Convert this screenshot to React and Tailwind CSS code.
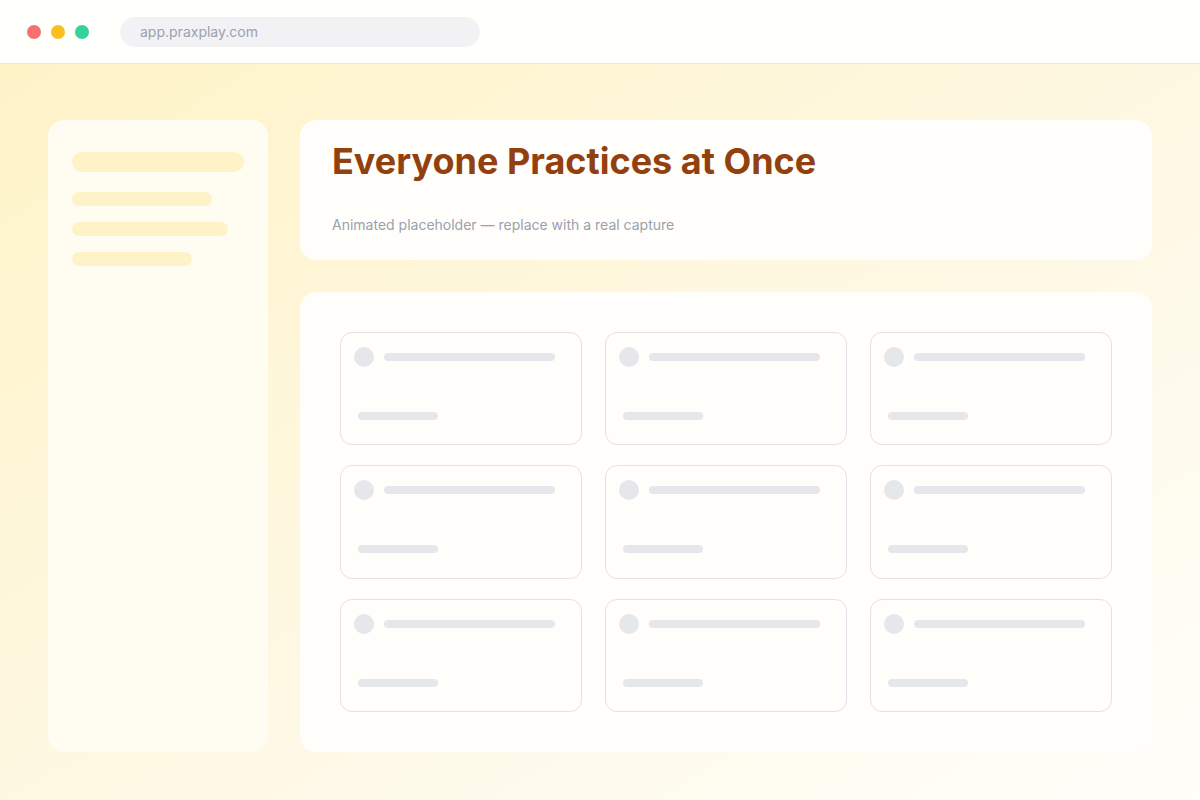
// App.jsx — browser-frame placeholder
const sideBars = ["w-[140px]", "w-[156px]", "w-[120px]"];
const tiles = Array.from({ length: 9 });

function Tile() {
  return (
    <div className="rounded-xl border-[1.5px] border-[#e0e2e8] bg-[#fffefb] pt-[14px] pl-[13px]">
      <div className="flex items-center gap-[10px]">
        <div className="w-5 h-5 rounded-full bg-gray-200" />
        <div className="w-[171px] h-2 rounded-full bg-gray-200" />
      </div>
      <div className="mt-[45px] ml-1 w-20 h-2 rounded-full bg-gray-200" />
    </div>
  );
}

export default function App() {
  return (
    <div
      className="w-[1200px] h-[800px] flex flex-col overflow-hidden"
      style={{ fontFamily: "Inter, 'Liberation Sans', sans-serif" }}
    >
      {/* barra del navegador */}
      <div className="h-16 shrink-0 flex items-center bg-[#fffffc] border-b border-gray-200 pl-[27px]">
        <div className="flex gap-[10px]">
          <span className="w-[14px] h-[14px] rounded-full bg-[#f87171]" />
          <span className="w-[14px] h-[14px] rounded-full bg-[#fbbf24]" />
          <span className="w-[14px] h-[14px] rounded-full bg-[#34d399]" />
        </div>
        <div className="ml-[31px] w-[360px] h-[30px] rounded-full bg-[#f2f2f5] flex items-center pl-5 text-sm text-gray-400">
          app.praxplay.com
        </div>
      </div>

      {/* contenido */}
      <div className="flex-1 flex gap-8 px-12 pt-14 pb-12 bg-gradient-to-br from-[#fef3c7] via-[#fef8e2] to-[#fffefa]">
        {/* sidebar */}
        <div className="w-[220px] shrink-0 rounded-2xl bg-[#fffcf2] px-6 pt-8">
          <div className="w-[172px] h-5 rounded-full bg-[#fef3c7]" />
          <div className="mt-5 flex flex-col gap-4">
            {sideBars.map((w, i) => (
              <div key={i} className={`${w} h-[14px] rounded-full bg-[#fef3c7]`} />
            ))}
          </div>
        </div>

        {/* principal */}
        <div className="flex-1 flex flex-col gap-8">
          <div className="rounded-2xl bg-[#fffefa] px-8 pt-[21px] pb-[25px]">
            <h1 className="text-4xl font-bold text-[#92400e]">Everyone Practices at Once</h1>
            <p className="mt-[34px] text-sm text-gray-400">
              Animated placeholder — replace with a real capture
            </p>
          </div>
          <div className="flex-1 rounded-2xl bg-[#fffefa] p-10 grid grid-cols-3 grid-rows-3 gap-x-[23px] gap-y-5">
            {tiles.map((_, i) => (
              <Tile key={i} />
            ))}
          </div>
        </div>
      </div>
    </div>
  );
}
